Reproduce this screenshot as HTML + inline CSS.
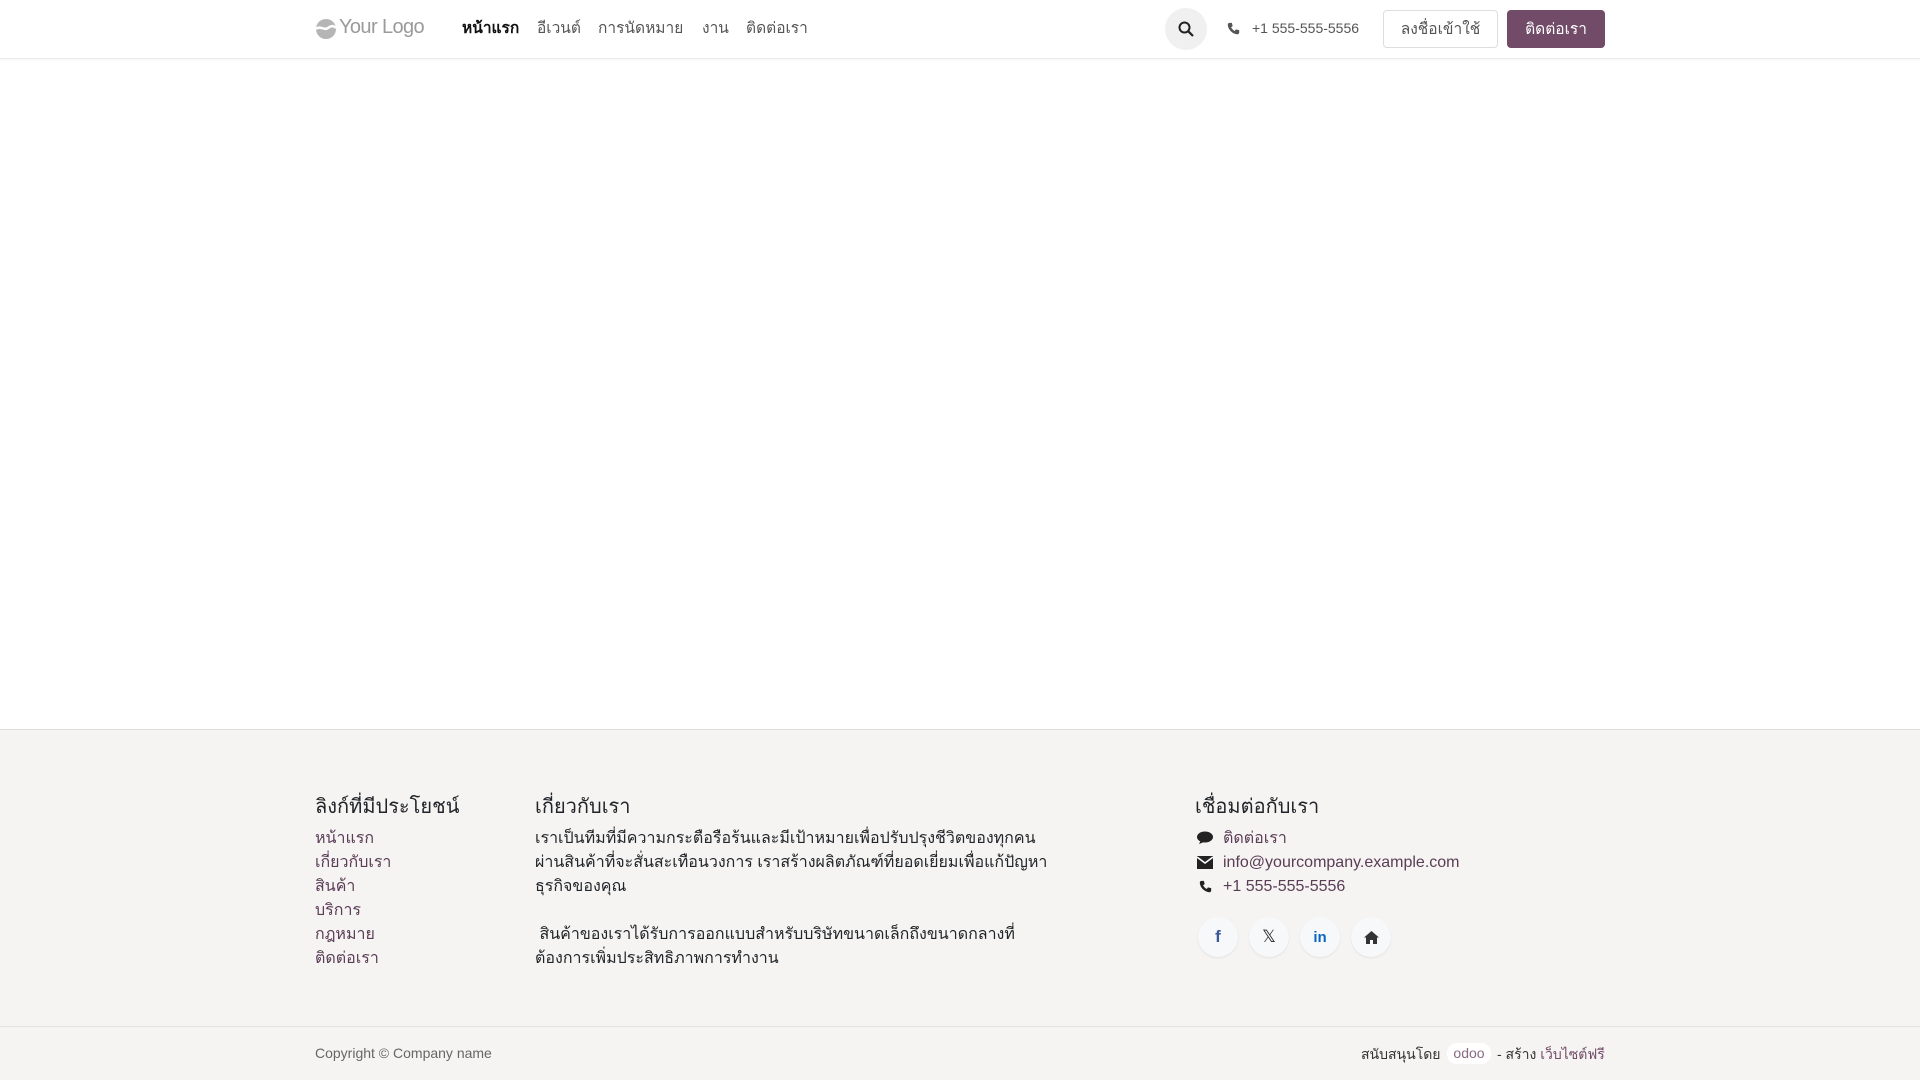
<!DOCTYPE html>
<html><head><meta charset="utf-8"><style>
*{box-sizing:border-box;margin:0;padding:0}
body{width:1920px;height:1080px;overflow:hidden;background:#fff;font-family:"Liberation Sans","Noto Sans CJK SC",sans-serif;color:#212529;font-size:16px;position:relative}
.hdr{position:absolute;left:0;top:0;width:1920px;height:59px;border-bottom:1px solid #e9e9e9;box-shadow:0 1px 2px rgba(0,0,0,.04)}
.abs{position:absolute;white-space:nowrap}
.nav{top:18px;font-size:15.5px;color:#555;line-height:22px}
.footer{position:absolute;left:0;top:729px;width:1920px;height:351px;background:#f5f4f3;border-top:1px solid #ddd}
.h5{font-size:20px;color:#212529;line-height:26px}
.lk{color:#5b3c55;line-height:24px;font-size:16px}
.txt{line-height:24px;font-size:16px;color:#212529}
.soc{position:absolute;top:917px;width:40px;height:40px;border-radius:50%;background:#f7f8fa;box-shadow:0 1px 2px rgba(0,0,0,.08);display:flex;align-items:center;justify-content:center}
</style></head><body>
<div class="hdr"></div>
<svg class="abs" style="left:315px;top:18px" width="22" height="22" viewBox="0 0 22 22"><circle cx="11" cy="11" r="10" fill="#b5b5b5"/><path d="M1 11c4-4 8 2 12-1s6-2 8 0" stroke="#fff" stroke-width="2.5" fill="none"/></svg>
<div class="abs" style="left:339px;top:16px;font-size:20px;color:#9a9a9a;letter-spacing:-.6px">Your Logo</div>
<div class="abs nav" style="left:462px;color:#111;font-weight:bold">หน้าแรก</div>
<div class="abs nav" style="left:537px">อีเวนต์</div>
<div class="abs nav" style="left:598px">การนัดหมาย</div>
<div class="abs nav" style="left:702px">งาน</div>
<div class="abs nav" style="left:746px">ติดต่อเรา</div>
<div class="abs" style="left:1165px;top:8px;width:42px;height:42px;border-radius:50%;background:#f0f0f0"></div>
<svg class="abs" style="left:1178px;top:21px" width="16" height="16" viewBox="0 0 16 16"><circle cx="6.5" cy="6.5" r="5" stroke="#222" stroke-width="2" fill="none"/><path d="M10.3 10.3L15 15" stroke="#222" stroke-width="2.2"/></svg>
<svg class="abs" style="left:1227px;top:22px" width="13" height="13" viewBox="0 0 16 16"><path d="M3 1l3 0 1 4-2 1.5c1 2 2.5 3.5 4.5 4.5L11 9l4 1v3c0 1-1 2-2 2C7 15 1 9 1 3c0-1 1-2 2-2z" fill="#555"/></svg>
<div class="abs" style="left:1252px;top:20px;font-size:14px;color:#555">+1 555-555-5556</div>
<div class="abs" style="left:1383px;top:10px;width:115px;height:38px;border:1px solid #ddd;border-radius:4px;font-size:15.5px;color:#555;text-align:center;line-height:38px">ลงชื่อเข้าใช้</div>
<div class="abs" style="left:1507px;top:10px;width:98px;height:38px;background:#714b67;border-radius:4px;font-size:15.5px;color:#fff;text-align:center;line-height:39px">ติดต่อเรา</div>

<div class="footer"></div>
<div class="abs h5" style="left:315px;top:794px">ลิงก์ที่มีประโยชน์</div>
<div class="abs lk" style="left:315px;top:827px">หน้าแรก<br>เกี่ยวกับเรา<br>สินค้า<br>บริการ<br>กฎหมาย<br>ติดต่อเรา</div>
<div class="abs h5" style="left:535px;top:794px">เกี่ยวกับเรา</div>
<div class="abs txt" style="left:535px;top:827px">เราเป็นทีมที่มีความกระตือรือร้นและมีเป้าหมายเพื่อปรับปรุงชีวิตของทุกคน<br>ผ่านสินค้าที่จะสั่นสะเทือนวงการ เราสร้างผลิตภัณฑ์ที่ยอดเยี่ยมเพื่อแก้ปัญหา<br>ธุรกิจของคุณ<br><br>&nbsp;สินค้าของเราได้รับการออกแบบสำหรับบริษัทขนาดเล็กถึงขนาดกลางที่<br>ต้องการเพิ่มประสิทธิภาพการทำงาน</div>
<div class="abs h5" style="left:1195px;top:794px">เชื่อมต่อกับเรา</div>
<svg class="abs" style="left:1197px;top:831px" width="16" height="14" viewBox="0 0 16 14"><ellipse cx="8" cy="6" rx="8" ry="5.5" fill="#222"/><path d="M2 13l2-4 3 2z" fill="#222"/></svg>
<svg class="abs" style="left:1197px;top:856px" width="16" height="13" viewBox="0 0 16 13"><rect width="16" height="13" fill="#222"/><path d="M0 1l8 6 8-6" stroke="#fff" stroke-width="1.5" fill="none"/></svg>
<svg class="abs" style="left:1199px;top:880px" width="13" height="13" viewBox="0 0 16 16"><path d="M3 1l3 0 1 4-2 1.5c1 2 2.5 3.5 4.5 4.5L11 9l4 1v3c0 1-1 2-2 2C7 15 1 9 1 3c0-1 1-2 2-2z" fill="#222"/></svg>
<div class="abs lk" style="left:1223px;top:827px">ติดต่อเรา<br>info@yourcompany.example.com<br>+1 555-555-5556</div>
<div class="soc" style="left:1198px"><span style="color:#3b5998;font-weight:bold;font-size:17px">f</span></div>
<div class="soc" style="left:1249px"><span style="color:#222;font-size:17px">𝕏</span></div>
<div class="soc" style="left:1300px"><span style="color:#0a66c2;font-weight:bold;font-size:15px">in</span></div>
<div class="soc" style="left:1351px"><svg width="15" height="13" viewBox="0 0 15 13"><path d="M7.5 0L0 6.5h2V13h4V9h3v4h4V6.5h2z" fill="#333"/></svg></div>
<div class="abs" style="left:0;top:1026px;width:1920px;border-top:1px solid #e3e3e3"></div>
<div class="abs" style="left:315px;top:1045px;font-size:14px;color:#666">Copyright © Company name</div>
<div class="abs" style="left:1361px;top:1044px;font-size:14px;color:#333">สนับสนุนโดย</div>
<div class="abs" style="left:1447px;top:1043px;width:44px;height:21px;background:#fff;border-radius:10px;font-size:14px;color:#8a6a83;text-align:center;line-height:21px">odoo</div>
<div class="abs" style="left:1497px;top:1044px;font-size:14px;color:#333">- สร้าง <span style="color:#714b67">เว็บไซต์ฟรี</span></div>
</body></html>
